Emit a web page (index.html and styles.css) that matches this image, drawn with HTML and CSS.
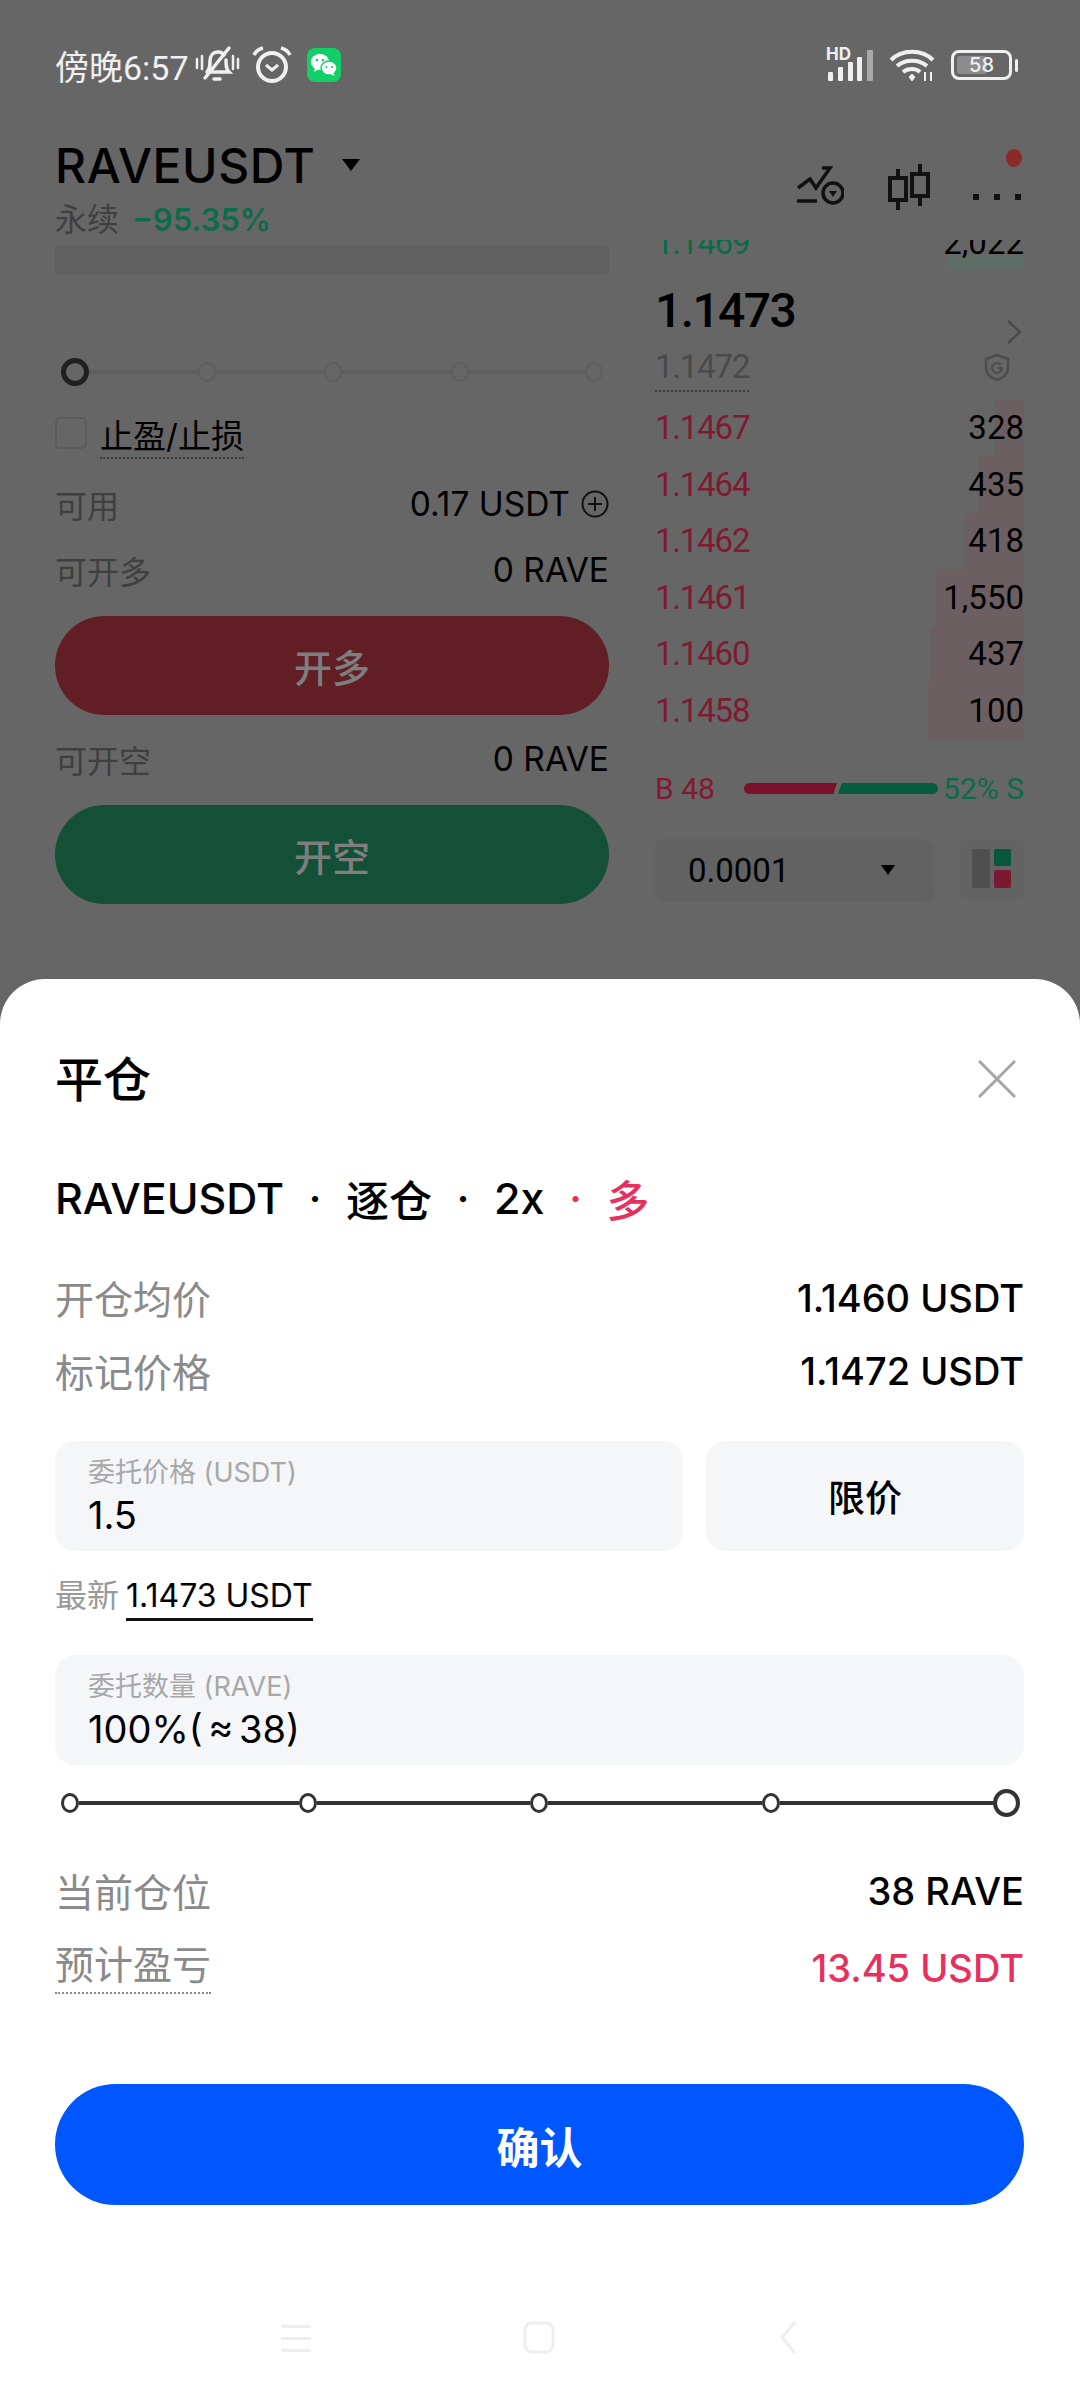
FILE: index.html
```html
<!doctype html>
<html lang="zh">
<head>
<meta charset="UTF-8">
<title>平仓</title>
<link rel="stylesheet" href="styles.css">
</head>
<body>
<div class="screen">
  <div class="top">
    <div class="status">
      <div class="status-left">
        <span class="clock">傍晚6:57</span>
        <svg class="ic-bell" width="46" height="40" viewBox="0 0 46 40" fill="none" stroke="#f0f0f0" stroke-width="3.5" stroke-linecap="round">
          <path d="M13 27c3-3 3-6 3-11 0-5 3-9 8-9 3 0 5 1 6 3"/>
          <path d="M32 15c0 5 0 9 3 12H17"/>
          <path d="M11 33 35 3"/>
          <path d="M20 34h6"/>
          <path d="M3 14v9M8 11v13M39 11v13M44 14v9" stroke-width="2.5"/>
        </svg>
        <svg class="ic-alarm" width="40" height="38" viewBox="0 0 40 38" fill="none" stroke="#f0f0f0" stroke-width="4">
          <circle cx="20" cy="21" r="14"/>
          <path d="M14 19l6 5 6-5" stroke-width="3"/>
          <path d="M2 9c2-4 5-6 9-7M38 9c-2-4-5-6-9-7" stroke-width="3.5"/>
        </svg>
        <svg class="ic-wx" width="34" height="34" viewBox="0 0 34 34">
          <rect width="34" height="34" rx="8" fill="#12cf68"/>
          <ellipse cx="13" cy="14" rx="9" ry="8" fill="#fff"/>
          <path d="M8 20l-1 4 5-3z" fill="#fff"/>
          <ellipse cx="22" cy="20" rx="8" ry="7" fill="#fff" stroke="#12cf68" stroke-width="1.5"/>
          <path d="M26 25l2 3-5-2z" fill="#fff"/>
          <circle cx="10" cy="12" r="1.3" fill="#12cf68"/><circle cx="16" cy="12" r="1.3" fill="#12cf68"/>
          <circle cx="19.500" cy="19" r="1.1" fill="#12cf68"/><circle cx="25" cy="19" r="1.1" fill="#12cf68"/>
        </svg>
      </div>
      <div class="status-right">
        <div class="signal">
          <span class="hd">HD</span>
          <svg width="50" height="32" viewBox="0 0 50 32" fill="#f0f0f0">
            <rect x="2" y="23" width="5" height="9" rx="1"/>
            <rect x="12" y="18" width="5" height="14" rx="1"/>
            <rect x="22" y="13" width="5" height="19" rx="1"/>
            <rect x="31" y="8" width="5" height="24" rx="1"/>
            <rect x="41" y="1" width="6" height="31" rx="1" fill="#a8a8a8"/>
          </svg>
        </div>
        <svg class="ic-wifi" width="46" height="34" viewBox="0 0 46 34" fill="none" stroke="#f0f0f0" stroke-width="4">
          <path d="M2 12c11-11 31-11 42 0"/>
          <path d="M8 18c8-7 22-7 30 0"/>
          <path d="M14 24c5-4 13-4 17 0"/>
          <path d="M20 29l3-3 3 3-3 4z" fill="#f0f0f0" stroke-width="1"/>
          <path d="M36 24v9M42 24v9" stroke-width="2"/>
        </svg>
        <div class="battery"><span class="battery-fill"></span><span class="battery-num">58</span></div>
        <span class="battery-tip"></span>
      </div>
    </div>

    <div class="head">
      <div>
        <div class="pair">RAVEUSDT<span class="pair-caret"></span></div>
        <div class="pair-sub"><span class="muted">永续</span> <span class="pct">−95.35%</span></div>
      </div>
      <div class="head-tools">
        <svg width="48" height="40" viewBox="0 0 48 40" fill="none" stroke="#111" stroke-width="3.500">
          <path d="M2 23l12-9 6 9L34 3l-8 0"/>
          <path d="M1 36h20"/>
          <circle cx="37" cy="28" r="10"/>
          <path d="M33 26h8l-4 6z" fill="#111" stroke="none"/>
        </svg>
        <svg width="44" height="46" viewBox="0 0 44 46" fill="none" stroke="#111" stroke-width="4">
          <path d="M11 5v9M11 36v10M33 0v10M33 32v10"/>
          <rect x="3" y="14" width="16" height="22"/>
          <rect x="25" y="10" width="16" height="22"/>
        </svg>
        <div class="more">
          <span class="more-dot"></span>
          <i></i><i></i><i></i>
        </div>
      </div>
    </div>

    <div class="columns">
      <div class="form">
        <div class="form-bar"></div>
        <div class="lev">
          <span class="lev-now"></span><span class="lev-seg"></span>
          <span class="lev-node"></span><span class="lev-seg"></span>
          <span class="lev-node"></span><span class="lev-seg"></span>
          <span class="lev-node"></span><span class="lev-seg lev-seg-last"></span>
          <span class="lev-node"></span>
        </div>
        <div class="tp">
          <span class="check"></span>
          <span class="tp-label">止盈/止损</span>
        </div>
        <div class="kv kv-dim avail">
          <span class="muted">可用</span>
          <span class="avail-val">0.17 USDT
            <svg width="28" height="28" viewBox="0 0 28 28" fill="none" stroke="#111" stroke-width="2"><circle cx="14" cy="14" r="12.500"/><path d="M14 7v14M7 14h14"/></svg>
          </span>
        </div>
        <div class="kv kv-dim can-long">
          <span class="muted">可开多</span>
          <span>0 RAVE</span>
        </div>
        <div class="trade trade-long">开多</div>
        <div class="kv kv-dim can-short">
          <span class="muted">可开空</span>
          <span>0 RAVE</span>
        </div>
        <div class="trade trade-short">开空</div>
      </div>

      <div class="book">
        <div class="clip">
          <div class="row clip-row"><span class="px-up">1.1469</span><span>2,022</span></div>
        </div>
        <div class="last">
          <span class="last-px">1.1473</span>
          <svg width="16" height="26" viewBox="0 0 16 26" fill="none" stroke="#4a4a4a" stroke-width="2.500"><path d="M2 2l12 11L2 24"/></svg>
        </div>
        <div class="mark">
          <span class="mark-px">1.1472</span>
          <svg width="26" height="28" viewBox="0 0 26 28" fill="none" stroke="#4d4d4d" stroke-width="2.500">
            <path d="M13 2l11 4v9c0 6-5 10-11 12C7 25 2 21 2 15V6z"/>
            <path d="M17 12a5 5 0 1 0 1 3h-4" stroke-width="2"/>
          </svg>
        </div>
        <div class="row" style="--d:29px"><span class="px-down">1.1467</span><span>328</span></div>
        <div class="row" style="--d:46px"><span class="px-down">1.1464</span><span>435</span></div>
        <div class="row" style="--d:59px"><span class="px-down">1.1462</span><span>418</span></div>
        <div class="row" style="--d:88px"><span class="px-down">1.1461</span><span>1,550</span></div>
        <div class="row" style="--d:94px"><span class="px-down">1.1460</span><span>437</span></div>
        <div class="row" style="--d:96px"><span class="px-down">1.1458</span><span>100</span></div>
        <div class="ratio">
          <span class="px-down">B 48</span>
          <div class="ratio-bar"><span class="ratio-b"></span><span class="ratio-s"></span></div>
          <span class="px-up">52% S</span>
        </div>
        <div class="book-tools">
          <div class="tick"><span>0.0001</span><span class="tick-caret"></span></div>
          <div class="layout">
            <svg width="40" height="40" viewBox="0 0 40 40">
              <rect x="0" y="0" width="18" height="39" rx="2" fill="#4f4f4f"/>
              <rect x="22" y="0" width="17" height="17" rx="2" fill="#07573a"/>
              <rect x="22" y="21" width="17" height="18" rx="2" fill="#7a1a30"/>
            </svg>
          </div>
        </div>
      </div>
    </div>
  </div>

  <div class="sheet">
    <div class="sheet-head">
      <span class="sheet-title">平仓</span>
      <svg class="sheet-close" width="38" height="38" viewBox="0 0 38 38" fill="none" stroke="#a6a6a6" stroke-width="3"><path d="M1 1l36 36M37 1L1 37"/></svg>
    </div>
    <div class="meta">
      <span>RAVEUSDT</span><i>·</i><span>逐仓</span><i>·</i><span>2x</span><i class="long">·</i><span class="long">多</span>
    </div>
    <div class="kv kv-first"><span class="grey">开仓均价</span><span>1.1460 USDT</span></div>
    <div class="kv kv-next"><span class="grey">标记价格</span><span>1.1472 USDT</span></div>

    <div class="price-row">
      <div class="field field-price">
        <span class="field-label">委托价格 (USDT)</span>
        <span class="field-val">1.5</span>
      </div>
      <div class="type-btn">限价</div>
    </div>
    <div class="latest"><span class="latest-label">最新</span><span class="latest-val">1.1473 USDT</span></div>

    <div class="field field-qty">
      <span class="field-label">委托数量 (RAVE)</span>
      <span class="field-val">100%( ≈ 38)</span>
    </div>
    <div class="qty-slider">
      <span class="qty-node"></span><span class="qty-seg qty-seg-first"></span>
      <span class="qty-node"></span><span class="qty-seg"></span>
      <span class="qty-node"></span><span class="qty-seg"></span>
      <span class="qty-node"></span><span class="qty-seg"></span>
      <span class="qty-now"></span>
    </div>

    <div class="kv kv-pos"><span class="grey">当前仓位</span><span>38 RAVE</span></div>
    <div class="kv kv-pnl"><span class="grey dotted">预计盈亏</span><span class="long">13.45 USDT</span></div>

    <div class="confirm">确认</div>

    <div class="nav">
      <svg width="30" height="30" viewBox="0 0 30 30" fill="#eeeeee"><rect y="2" width="30" height="3"/><rect y="14" width="30" height="3"/><rect y="26" width="30" height="3"/></svg>
      <svg width="32" height="33" viewBox="0 0 32 33" fill="none" stroke="#eeeeee" stroke-width="3"><rect x="2" y="2" width="28" height="29" rx="7"/></svg>
      <svg width="30" height="33" viewBox="0 0 30 33" fill="none" stroke="#eeeeee" stroke-width="3"><path d="M29 1L16 16.500l13 15.500"/></svg>
    </div>
  </div>
</div>
</body>
</html>
```

FILE: styles.css
```css
* {
  margin: 0;
  padding: 0;
  box-sizing: border-box;
}

body {
  width: 1080px;
  height: 2400px;
  overflow: hidden;
  font-family: Inter, "Noto Sans CJK SC", sans-serif;
  color: #000;
}

.screen {
  width: 1080px;
  height: 2400px;
  display: flex;
  flex-direction: column;
  background: #666;
}

/* dimmed page behind the sheet */
.top {
  height: 979px;
  padding: 0 56px 0 55px;
  overflow: hidden;
}

.status {
  height: 130px;
  display: flex;
  justify-content: space-between;
  align-items: center;
  color: #f0f0f0;
}

.status-left {
  display: flex;
  align-items: center;
}

.clock {
  width: 132px;
  font-family: Roboto, "Noto Sans CJK SC", sans-serif;
  font-size: 34px;
  white-space: nowrap;
}

.ic-bell {
  margin-left: 7px;
}

.ic-alarm {
  margin-left: 12px;
}

.ic-wx {
  margin-left: 15px;
}

.status-right {
  display: flex;
  align-items: center;
  margin-right: 6px;
}

.signal {
  position: relative;
  width: 50px;
  height: 32px;
}

.hd {
  position: absolute;
  left: 0;
  top: -3px;
  font-size: 17px;
  font-weight: 700;
  line-height: 16px;
}

.ic-wifi {
  margin-left: 13px;
}

.battery {
  position: relative;
  width: 61px;
  height: 30px;
  margin-left: 16px;
  border: 3px solid #f0f0f0;
  border-radius: 8px;
  display: flex;
  align-items: center;
  justify-content: center;
}

.battery-fill {
  position: absolute;
  left: 3px;
  top: 3px;
  bottom: 3px;
  width: 30px;
  background: #8d8d8d;
  border-radius: 3px;
}

.battery-num {
  position: relative;
  font-size: 20px;
  font-weight: 500;
  line-height: 20px;
}

.battery-tip {
  width: 3px;
  height: 13px;
  margin-left: 3px;
  background: #f0f0f0;
  border-radius: 2px;
}

.head {
  height: 110px;
  display: flex;
  justify-content: space-between;
}

.pair {
  height: 70px;
  display: flex;
  align-items: center;
  font-size: 48px;
  font-weight: 500;
  letter-spacing: 0.6px;
}

.pair-caret {
  width: 0;
  height: 0;
  margin-left: 26px;
  border-left: 9px solid transparent;
  border-right: 9px solid transparent;
  border-top: 12px solid #000;
}

.pair-sub {
  height: 40px;
  line-height: 40px;
  font-size: 32px;
}

.muted {
  color: #3f3f3f;
  font-size: 32px;
}

.pct {
  color: #0b6b4a;
  font-size: 31px;
  font-weight: 600;
  margin-left: 4px;
}

.head-tools {
  display: flex;
  align-items: flex-end;
  gap: 43px;
  height: 80px;
}

.head-tools svg:first-child {
  margin-bottom: 5px;
}

.more {
  position: relative;
  width: 48px;
  height: 30px;
  display: flex;
  justify-content: space-between;
  align-items: flex-start;
  margin-right: 3px;
  margin-left: -1px;
}

.more i {
  width: 6px;
  height: 6px;
  margin-top: 14px;
  background: #111;
}

.more-dot {
  position: absolute;
  top: -31px;
  right: -1px;
  width: 16px;
  height: 18px;
  border-radius: 50%;
  background: #8c2a2a;
}

.columns {
  display: flex;
  gap: 46px;
}

.form {
  width: 554px;
}

.form-bar {
  height: 30px;
  margin-top: 5px;
  background: #616161;
  border-radius: 4px;
}

.lev {
  display: flex;
  align-items: center;
  height: 28px;
  margin-top: 83px;
  padding: 0 6px;
}

.lev-now {
  width: 28px;
  height: 28px;
  border: 5px solid #202020;
  border-radius: 50%;
}

.lev-node {
  width: 18px;
  height: 20px;
  border: 2px solid #5d5f5f;
  border-radius: 50%;
}

.lev-seg {
  flex: 1;
  height: 4px;
  background: #5d5f5f;
}

.lev-seg-last {
  flex: 0 0 116px;
}

.tp {
  display: flex;
  align-items: flex-start;
  margin-top: 31px;
  height: 65px;
}

.check {
  width: 32px;
  height: 32px;
  border: 2px solid #5c5c5c;
  border-radius: 5px;
}

.tp-label {
  margin-left: 13px;
  padding-bottom: 2px;
  font-size: 33px;
  line-height: 38px;
  border-bottom: 2px dotted #3d3d3d;
}

.kv {
  display: flex;
  justify-content: space-between;
  align-items: center;
  height: 50px;
  font-size: 38px;
  font-weight: 500;
}

.kv-dim {
  height: 44px;
  font-size: 33.5px;
  font-weight: 400;
}

.avail-val {
  display: flex;
  align-items: center;
  gap: 11px;
}

.can-long {
  margin-top: 22px;
}

.trade {
  height: 99px;
  border-radius: 50px;
  display: flex;
  align-items: center;
  justify-content: center;
  font-size: 38px;
  font-weight: 500;
  color: #7e7e7e;
}

.trade-long {
  margin-top: 24px;
  background: #611f25;
}

.can-short {
  margin-top: 22px;
}

.trade-short {
  margin-top: 24px;
  background: #135037;
}

.book {
  width: 369px;
  font-family: Roboto, "Noto Sans CJK SC", sans-serif;
  font-size: 33px;
}

.clip {
  height: 29px;
  overflow: hidden;
  display: flex;
  align-items: flex-end;
}

.row {
  width: 100%;
  height: 56.5px;
  display: flex;
  justify-content: space-between;
  align-items: center;
  background: linear-gradient(#6c5f62, #6c5f62) right top / var(--d, 0) 100% no-repeat;
}

.clip-row {
  flex-shrink: 0;
  height: 54px;
  background: linear-gradient(#5e6d66, #5e6d66) right bottom / 77px 14px no-repeat;
}

.px-up {
  color: #0b6b4a;
}

.px-down {
  color: #7f1a32;
}

.row .px-up,
.row .px-down,
.mark-px {
  letter-spacing: -1.2px;
}

.last {
  height: 76px;
  display: flex;
  justify-content: space-between;
  align-items: flex-end;
}

.last svg {
  margin-right: 2px;
}

.last-px {
  align-self: flex-start;
  margin-top: 14px;
  font-size: 48px;
  line-height: 56px;
  font-weight: 500;
  letter-spacing: -1.6px;
}

.mark {
  height: 54.5px;
  display: flex;
  justify-content: space-between;
  align-items: flex-start;
  padding-top: 5px;
}

.mark svg {
  margin-top: 3px;
  margin-right: 14px;
}

.mark-px {
  color: #4a4a4a;
  line-height: 34px;
  padding-bottom: 6px;
  border-bottom: 2px dotted #3d3d3d;
}

.ratio {
  display: flex;
  justify-content: space-between;
  align-items: center;
  height: 30px;
  margin-top: 35px;
  font-size: 30px;
}

.ratio-bar {
  display: flex;
  width: 194px;
  height: 11px;
  margin-left: 24px;
}

.ratio-b {
  width: 93px;
  background: #7a1029;
  border-radius: 6px 0 0 6px;
  clip-path: polygon(0 0, 100% 0, 96% 100%, 0 100%);
}

.ratio-s {
  flex: 1;
  margin-left: 1px;
  background: #055c3e;
  border-radius: 0 6px 6px 0;
  clip-path: polygon(4% 0, 100% 0, 100% 100%, 0 100%);
}

.book-tools {
  display: flex;
  justify-content: space-between;
  margin-top: 35px;
}

.tick {
  width: 280px;
  height: 63px;
  padding: 0 40px 0 33px;
  display: flex;
  justify-content: space-between;
  align-items: center;
  background: #626262;
  border-radius: 10px;
}

.tick-caret {
  width: 0;
  height: 0;
  border-left: 7px solid transparent;
  border-right: 7px solid transparent;
  border-top: 10px solid #000;
}

.layout {
  width: 64px;
  height: 60px;
  display: flex;
  align-items: center;
  justify-content: center;
  background: #636363;
  border-radius: 8px;
}

/* bottom sheet */
.sheet {
  height: 1421px;
  padding: 67px 56px 0 55px;
  background: #fff;
  border-radius: 45px 45px 0 0;
}

.sheet-head {
  height: 60px;
  display: flex;
  justify-content: space-between;
  align-items: center;
  padding-right: 8px;
}

.sheet-close {
  margin-top: 5px;
}

.sheet-title {
  font-size: 48px;
  font-weight: 500;
}

.meta {
  display: flex;
  align-items: center;
  height: 60px;
  margin-top: 62px;
  font-size: 43px;
  font-weight: 500;
}

.meta i {
  font-style: normal;
  width: 62px;
  text-align: center;
}

.long {
  color: #e8305f;
}

.grey {
  margin-bottom: 3px;
  font-size: 39px;
  font-weight: 400;
  color: #8a8a8a;
}

.kv-first {
  margin-top: 45px;
}

.kv-next {
  margin-top: 23px;
}

.price-row {
  display: flex;
  gap: 23px;
  margin-top: 45px;
}

.field {
  display: flex;
  flex-direction: column;
  height: 110px;
  padding: 16px 33px 0;
  background: #f4f6f8;
  border-radius: 20px;
}

.field-price {
  width: 628px;
}

.field-label {
  font-size: 27px;
  line-height: 32px;
  color: #a8a8a8;
}

.field-val {
  margin-top: 4px;
  font-size: 38px;
  line-height: 44px;
  word-spacing: -5px;
}

.type-btn {
  flex: 1;
  display: flex;
  align-items: center;
  justify-content: center;
  background: #f4f6f8;
  border-radius: 20px;
  font-size: 37px;
  font-weight: 500;
}

.latest {
  display: flex;
  align-items: flex-start;
  margin-top: 27px;
  height: 77px;
  font-size: 32px;
  line-height: 36px;
}

.latest-label {
  color: #999;
}

.latest-val {
  margin-left: 7px;
  padding-bottom: 4px;
  border-bottom: 3px solid #111;
}

.qty-slider {
  display: flex;
  align-items: center;
  height: 28px;
  margin-top: 24px;
  padding: 0 4px 0 6px;
}

.qty-node {
  width: 18px;
  height: 20px;
  background: #fff;
  border: 3px solid #333;
  border-radius: 50%;
}

.qty-now {
  width: 27px;
  height: 28px;
  background: #fff;
  border: 4px solid #333;
  border-radius: 50%;
}

.qty-seg {
  flex: 1;
  height: 4px;
  background: #333;
}

.qty-seg-first {
  flex: 0 0 220px;
}

.kv-pos {
  margin-top: 49px;
}

.kv-pnl {
  margin-top: 27px;
}

.dotted {
  margin-bottom: 0;
  height: 52px;
  line-height: 46px;
  border-bottom: 2px dotted #8a8a8a;
}

.confirm {
  height: 121px;
  margin-top: 91px;
  display: flex;
  align-items: center;
  justify-content: center;
  background: #0057ff;
  border-radius: 61px;
  font-size: 43px;
  font-weight: 700;
  color: #fff;
}

.nav {
  display: flex;
  justify-content: space-between;
  align-items: center;
  margin-top: 116px;
  padding: 0 228px 0 226px;
}
```
